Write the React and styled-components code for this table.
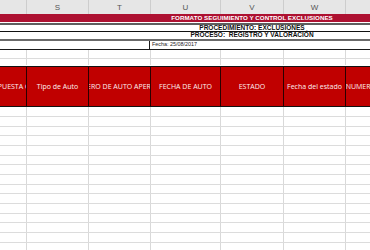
import React from 'react';
import styled, { createGlobalStyle } from 'styled-components';

const Global = createGlobalStyle`
  html, body { margin: 0; padding: 0; background: #fff; overflow: hidden; }
  body { width: 370px; height: 250px; }
`;

const COLS = [
  { letter: 'R', w: 62, head: 'FECHA DE ENVIO RESPUESTA CONCEPTO' },
  { letter: 'S', w: 62, head: 'Tipo de Auto' },
  { letter: 'T', w: 62, head: 'NUMERO DE AUTO APERTURA' },
  { letter: 'U', w: 70, head: 'FECHA DE AUTO' },
  { letter: 'V', w: 63, head: 'ESTADO' },
  { letter: 'W', w: 62, head: 'Fecha del estado' },
  { letter: 'X', w: 62, head: 'NUMERO DE AUTO' },
];
const TEMPLATE = COLS.map((c) => `${c.w}px`).join(' ');
const SHEET_W = COLS.reduce((s, c) => s + c.w, 0);

const Viewport = styled.div`
  width: 370px;
  height: 250px;
  overflow: hidden;
  background: #fff;
`;

const Sheet = styled.div`
  margin-left: -35px;
  width: ${SHEET_W}px;
  display: flex;
  flex-direction: column;
`;

const ColumnBar = styled.div`
  display: grid;
  grid-template-columns: ${TEMPLATE};
  height: 14px;
  background: #e6e6e6;
`;

const ColumnLetter = styled.div`
  display: flex;
  align-items: center;
  justify-content: center;
  border-right: 1px solid #cdcdcd;
  box-sizing: border-box;
  font-family: "Liberation Sans", Arial, sans-serif;
  font-size: 8px;
  color: #555;
`;

const TitleBand = styled.div`
  height: 8px;
  margin-bottom: 1px;
  background: #ad1131;
  display: flex;
  align-items: center;
  justify-content: center;
  padding-left: 131px;
  overflow: hidden;
`;

const MergedRow = styled.div`
  box-sizing: border-box;
  height: ${(p) => p.$h}px;
  border-top: ${(p) => p.$top || 'none'};
  border-bottom: ${(p) => p.$bottom || 'none'};
  display: flex;
  align-items: center;
  justify-content: center;
  padding-left: 131px;
  overflow: visible;
`;

const TitleText = styled.span`
  font-family: "Liberation Sans", Arial, sans-serif;
  font-weight: bold;
  font-size: ${(p) => p.$size}px;
  letter-spacing: ${(p) => p.$ls || 0}px;
  line-height: 1;
  color: ${(p) => p.$color};
  white-space: pre;
`;

const DateRow = styled.div`
  display: grid;
  grid-template-columns: 185px 1fr;
  box-sizing: border-box;
  height: 9px;
  border-bottom: 1px solid #1a1a1a;
`;

const DateCell = styled.div`
  box-sizing: border-box;
  border-right: ${(p) => (p.$divider ? '1px solid #1a1a1a' : 'none')};
  display: flex;
  align-items: center;
  padding-left: 2px;
  font-family: "Liberation Sans", Arial, sans-serif;
  font-size: 5.4px;
  color: #222;
  line-height: 1;
`;

const GridRow = styled.div`
  display: grid;
  grid-template-columns: ${TEMPLATE};
  box-sizing: border-box;
  height: ${(p) => p.$h}px;
  border-bottom: 1px solid ${(p) => p.$line || '#dcdcdc'};
`;

const GridCell = styled.div`
  box-sizing: border-box;
  border-right: 1px solid #d9d9d9;
`;

const HeaderRow = styled.div`
  display: grid;
  grid-template-columns: ${TEMPLATE};
  box-sizing: border-box;
  height: 41px;
  border-top: 1px solid #111;
  border-bottom: 1px solid #111;
  background: #c00000;
`;

const HeaderCell = styled.div`
  box-sizing: border-box;
  border-right: 1px solid #2a0000;
  display: flex;
  align-items: center;
  justify-content: center;
  overflow: hidden;
  font-family: "Open Sans", sans-serif;
  font-size: 7px;
  color: #fdf0f0;
  white-space: nowrap;
`;

const HeaderLabel = styled.span`
  flex: none;
`;

const DATA_ROWS = Array.from({ length: 15 }, (_, i) => (i % 3 === 2 ? 9 : 10));

export default function App() {
  return (
    <>
      <Global />
      <Viewport>
        <Sheet>
          <ColumnBar>
            {COLS.map((c) => (
              <ColumnLetter key={c.letter}>{c.letter}</ColumnLetter>
            ))}
          </ColumnBar>

          <TitleBand>
            <TitleText $size={6.2} $ls={0.05} $color="#fff">
              FORMATO SEGUIMIENTO Y CONTROL EXCLUSIONES
            </TitleText>
          </TitleBand>

          <MergedRow $h={9} $top="2px solid #5e5e5e" $bottom="1px solid #111">
            <TitleText $size={6.5} $color="#111">
              PROCEDIMIENTO: EXCLUSIONES
            </TitleText>
          </MergedRow>

          <MergedRow $h={9} $bottom="2px solid #6a6a6a">
            <TitleText $size={6.5} $color="#111">
              {'PROCESO:  REGISTRO Y VALORACIÓN'}
            </TitleText>
          </MergedRow>

          <DateRow>
            <DateCell $divider />
            <DateCell>Fecha: 25/08/2017</DateCell>
          </DateRow>

          <GridRow $h={9}>
            {COLS.map((c) => (
              <GridCell key={c.letter} />
            ))}
          </GridRow>
          <GridRow $h={7} $line="transparent">
            {COLS.map((c) => (
              <GridCell key={c.letter} />
            ))}
          </GridRow>

          <HeaderRow>
            {COLS.map((c) => (
              <HeaderCell key={c.letter}>
                <HeaderLabel>{c.head}</HeaderLabel>
              </HeaderCell>
            ))}
          </HeaderRow>

          {DATA_ROWS.map((h, i) => (
            <GridRow key={i} $h={h}>
              {COLS.map((c) => (
                <GridCell key={c.letter} />
              ))}
            </GridRow>
          ))}
        </Sheet>
      </Viewport>
    </>
  );
}
